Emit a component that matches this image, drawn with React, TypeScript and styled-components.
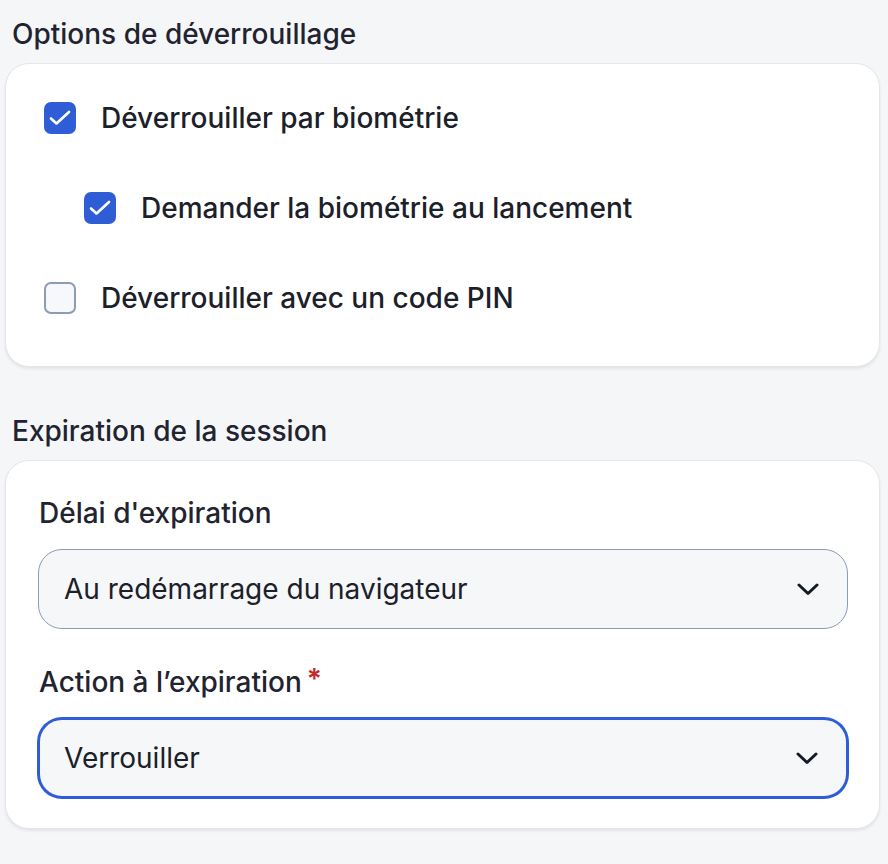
import React from 'react';
import styled, { createGlobalStyle } from 'styled-components';

const GlobalStyle = createGlobalStyle`
  html, body {
    margin: 0;
    padding: 0;
    background: #f5f6f8;
  }
  body {
    font-family: Inter, "Noto Sans", sans-serif;
    color: #1b2029;
    -webkit-font-smoothing: antialiased;
  }
`;

const Page = styled.main`
  display: flex;
  flex-direction: column;
  padding: 16px 8px 34px 5px;
`;

const SectionTitle = styled.h2<{ $first?: boolean }>`
  margin: ${(p) => (p.$first ? '0' : '46px')} 0 11px;
  padding-left: 7px;
  font-size: 28px;
  line-height: 36px;
  font-weight: 500;
  color: #1f2430;
`;

const Card = styled.section<{ $pad: string }>`
  display: flex;
  flex-direction: column;
  background: #ffffff;
  border: 1px solid #e4e6ea;
  border-radius: 24px;
  box-shadow: 0 2px 3px rgba(20, 30, 50, 0.08);
  padding: ${(p) => p.$pad};
`;

const CheckList = styled.div`
  display: flex;
  flex-direction: column;
  gap: 58px;
`;

const CheckRow = styled.label<{ $indent?: boolean }>`
  display: flex;
  align-items: center;
  gap: 25px;
  height: 32px;
  padding-left: ${(p) => (p.$indent ? '40px' : '0')};
  font-size: 28px;
  font-weight: 500;
  color: #1b2029;
  cursor: pointer;
`;

const Box = styled.span<{ $checked: boolean }>`
  flex: none;
  display: flex;
  align-items: center;
  justify-content: center;
  width: 32px;
  height: 32px;
  box-sizing: border-box;
  border-radius: 7px;
  background: ${(p) => (p.$checked ? '#2e5dd6' : '#f6f8fb')};
  border: ${(p) => (p.$checked ? 'none' : '2px solid #8d9bb5')};
`;

const Field = styled.div`
  display: flex;
  flex-direction: column;
  gap: 18px;
  & + & {
    margin-top: 35px;
  }
`;

const Label = styled.div`
  display: flex;
  align-items: flex-start;
  gap: 5px;
  padding-left: 1px;
  font-size: 28px;
  line-height: 36px;
  font-weight: 500;
  color: #1f2430;
`;

const Required = styled.span`
  color: #c22a2a;
  font-size: 28px;
  font-weight: 600;
  line-height: 30px;
`;

const Select = styled.div<{ $focused?: boolean }>`
  display: flex;
  align-items: center;
  justify-content: space-between;
  height: 80px;
  box-sizing: border-box;
  padding: 0 28px 0 ${(p) => (p.$focused ? '24px' : '25px')};
  background: #f6f7f9;
  border-radius: 24px;
  border: ${(p) => (p.$focused ? '2px solid #2e5dd6' : '1px solid #8d9bb5')};
  box-shadow: ${(p) => (p.$focused ? '0 0 0 1px #2e5dd6' : 'none')};
  font-size: 28px;
  color: #1b2029;
`;

const Check = () => (
  <svg width="22" height="16" viewBox="0 0 22 16" fill="none">
    <path d="M2 8.5 L7.5 13.5 L20 2" stroke="#fff" strokeWidth="2.6" strokeLinecap="round" strokeLinejoin="round" />
  </svg>
);

const Chevron = () => (
  <svg width="22" height="13" viewBox="0 0 22 13" fill="none">
    <path d="M2 2 L11 10.5 L20 2" stroke="#141a26" strokeWidth="3" strokeLinecap="round" strokeLinejoin="round" />
  </svg>
);

const options = [
  { label: 'Déverrouiller par biométrie', checked: true, indent: false },
  { label: 'Demander la biométrie au lancement', checked: true, indent: true },
  { label: 'Déverrouiller avec un code PIN', checked: false, indent: false },
];

export default function App() {
  return (
    <>
      <GlobalStyle />
      <Page>
        <SectionTitle $first>Options de déverrouillage</SectionTitle>
        <Card $pad="38px 38px 52px">
          <CheckList>
            {options.map((o) => (
              <CheckRow key={o.label} $indent={o.indent}>
                <Box $checked={o.checked}>{o.checked && <Check />}</Box>
                {o.label}
              </CheckRow>
            ))}
          </CheckList>
        </Card>

        <SectionTitle>Expiration de la session</SectionTitle>
        <Card $pad="34px 31px 30px 32px">
          <Field>
            <Label>Délai d'expiration</Label>
            <Select>
              Au redémarrage du navigateur
              <Chevron />
            </Select>
          </Field>
          <Field>
            <Label>
              Action à l’expiration<Required>*</Required>
            </Label>
            <Select $focused>
              Verrouiller
              <Chevron />
            </Select>
          </Field>
        </Card>
      </Page>
    </>
  );
}
